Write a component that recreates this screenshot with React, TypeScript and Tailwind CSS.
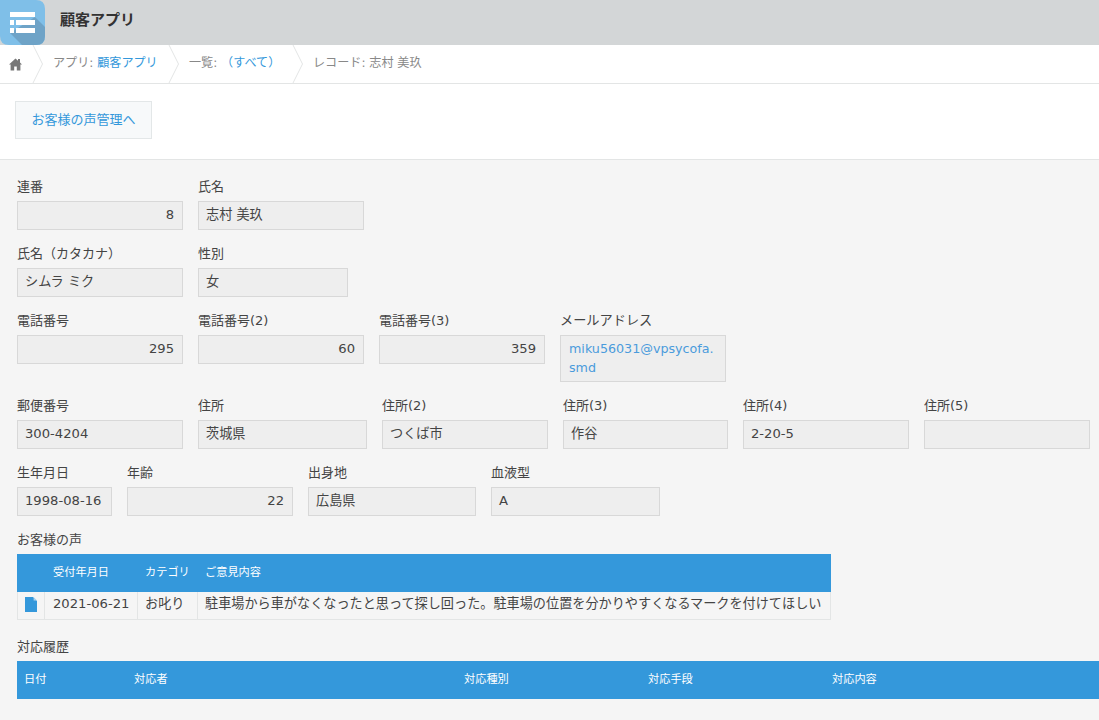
import React from 'react';

const FONT = '"DejaVu Sans", "Noto Sans CJK JP", sans-serif';

type FieldProps = {
  label: string;
  value?: string;
  width: string;
  right?: boolean;
};

const Field: React.FC<FieldProps> = ({ label, value, width, right }) => (
  <div className={`${width} shrink-0`}>
    <div className="h-[22px] text-[13px] leading-[15px] text-[#444444] whitespace-nowrap">{label}</div>
    <div
      className={`h-[29px] border border-[#d8d8d8] bg-[#eeeeee] pl-[7px] pr-[8px] text-[13.15px] leading-[25px] text-[#444444] whitespace-nowrap ${right ? 'text-right' : ''}`}
    >
      {value}
    </div>
  </div>
);

const Crumb: React.FC = () => (
  <svg width="12" height="38" viewBox="0 0 12 38" className="shrink-0" fill="none">
    <path d="M1 0 L10.5 19 L1 38" stroke="#e3e5e5" strokeWidth="1" />
  </svg>
);

const AppIcon: React.FC = () => (
  <svg width="45" height="45" viewBox="0 0 45 45" className="shrink-0">
    <defs>
      <clipPath id="appClip">
        <path d="M0 0 H36 Q45 0 45 9 V36 Q45 45 36 45 H9 Q0 45 0 36 Z" />
      </clipPath>
    </defs>
    <g clipPath="url(#appClip)">
      <rect width="45" height="45" fill="#7fbfe8" />
      <path d="M35 17 L45 27 V45 H22 L10 33 Z" fill="#6ea3c7" />
      <rect x="10" y="12" width="25" height="5" fill="#ffffff" />
      <rect x="10" y="20" width="4" height="5" fill="#ffffff" />
      <rect x="16" y="20" width="19" height="5" fill="#ffffff" />
      <rect x="10" y="28" width="4" height="5" fill="#ffffff" />
      <rect x="16" y="28" width="19" height="5" fill="#ffffff" />
    </g>
  </svg>
);

const App: React.FC = () => {
  return (
    <div className="h-[720px] w-[1099px] overflow-hidden bg-[#f5f5f5]" style={{ fontFamily: FONT }}>
      {/* App header */}
      <div className="flex h-[45px] items-center bg-[#d3d6d7]">
        <AppIcon />
        <div className="ml-[15px] mb-[4px] text-[15px] font-bold text-[#333333]">顧客アプリ</div>
      </div>

      {/* Breadcrumb */}
      <div className="flex h-[39px] items-center border-b border-[#e3e5e5] bg-white text-[12.1px] text-[#888888]">
        <svg width="13" height="13" viewBox="0 0 13 13" className="ml-[9px] mr-[10px] shrink-0" fill="#777777">
          <path d="M6.5 0.5 L9 2.8 V1 H11 V4.6 L13 6.6 H11.4 V12.5 H7.8 V8.4 H5.2 V12.5 H1.6 V6.6 H0 Z" />
        </svg>
        <Crumb />
        <div className="ml-[9px] mb-[2px] w-[115px] whitespace-nowrap">
          アプリ: <span className="text-[#3498db]">顧客アプリ</span>
        </div>
        <Crumb />
        <div className="ml-[9px] mb-[2px] w-[103px] whitespace-nowrap">
          一覧: <span className="text-[#3498db]">（すべて）</span>
        </div>
        <Crumb />
        <div className="ml-[9px] mb-[2px] whitespace-nowrap">レコード: 志村 美玖</div>
      </div>

      {/* Action button */}
      <div className="h-[76px] border-b border-[#e3e5e5] bg-white pl-[15px] pt-[17px]">
        <div className="flex h-[38px] w-[137px] items-center justify-center border border-[#e3e7e8] bg-[#f7f9fa] text-[13px] text-[#3498db]">
          お客様の声管理へ
        </div>
      </div>

      {/* Record form */}
      <div className="pl-[17px] pt-[19px]">
        <div className="flex h-[67px] gap-[15px]">
          <Field label="連番" value="8" width="w-[166px]" right />
          <Field label="氏名" value="志村 美玖" width="w-[166px]" />
        </div>
        <div className="flex h-[67px] gap-[15px]">
          <Field label="氏名（カタカナ）" value="シムラ ミク" width="w-[166px]" />
          <Field label="性別" value="女" width="w-[150px]" />
        </div>
        <div className="flex h-[85px] gap-[15px]">
          <Field label="電話番号" value="295" width="w-[166px]" right />
          <Field label="電話番号(2)" value="60" width="w-[166px]" right />
          <Field label="電話番号(3)" value="359" width="w-[166px]" right />
          <div className="w-[166px] shrink-0">
            <div className="h-[22px] text-[13.2px] leading-[15px] text-[#444444]">メールアドレス</div>
            <div className="h-[47px] border border-[#d8d8d8] bg-[#eeeeee] pl-[8px] py-[3px] text-[12.7px] leading-[19px] text-[#4a9bdc] whitespace-nowrap">
              miku56031@vpsycofa.
              <br />
              smd
            </div>
          </div>
        </div>
        <div className="flex h-[67px] gap-[15px]">
          <Field label="郵便番号" value="300-4204" width="w-[166px]" />
          <Field label="住所" value="茨城県" width="w-[169px]" />
          <Field label="住所(2)" value="つくば市" width="w-[166px]" />
          <Field label="住所(3)" value="作谷" width="w-[165px]" />
          <Field label="住所(4)" value="2-20-5" width="w-[166px]" />
          <Field label="住所(5)" width="w-[166px]" />
        </div>
        <div className="flex h-[67px] gap-[15px]">
          <Field label="生年月日" value="1998-08-16" width="w-[95px]" />
          <Field label="年齢" value="22" width="w-[166px]" right />
          <Field label="出身地" value="広島県" width="w-[168px]" />
          <Field label="血液型" value="A" width="w-[169px]" />
        </div>

        {/* Voice table */}
        <div className="h-[22px] text-[13px] leading-[15px] text-[#444444]">お客様の声</div>
        <div className="w-[814px]">
          <div className="flex h-[38px] items-center bg-[#3498db] text-[11.2px] text-white">
            <div className="w-[36px] shrink-0" />
            <div className="w-[92px] shrink-0">受付年月日</div>
            <div className="w-[60px] shrink-0">カテゴリ</div>
            <div>ご意見内容</div>
          </div>
          <div className="flex h-[28px] border-x border-b border-[#e3e5e5] text-[13.15px] leading-[24px] text-[#444444]">
            <div className="flex w-[27px] shrink-0 justify-center border-r border-[#e3e5e5] pt-[5px]">
              <svg width="12" height="15" viewBox="0 0 12 15" fill="#3498db">
                <path d="M0 0 H8 L12 4 V15 H0 Z" />
                <path d="M8.6 0 L12 3.4 H8.6 Z" fill="#a9d2ee" />
              </svg>
            </div>
            <div className="w-[93px] shrink-0 border-r border-[#e3e5e5] pl-[8px]">2021-06-21</div>
            <div className="w-[60px] shrink-0 border-r border-[#e3e5e5] pl-[7px]">お叱り</div>
            <div className="whitespace-nowrap pl-[7px]">駐車場から車がなくなったと思って探し回った。駐車場の位置を分かりやすくなるマークを付けてほしい</div>
          </div>
        </div>

        {/* History table */}
        <div className="mt-[19px] h-[22px] text-[13px] leading-[15px] text-[#444444]">対応履歴</div>
        <div className="flex h-[38px] w-[1082px] items-center bg-[#3498db] text-[11.2px] text-white">
          <div className="w-[117px] shrink-0 pl-[7px]">日付</div>
          <div className="w-[330px] shrink-0">対応者</div>
          <div className="w-[184px] shrink-0">対応種別</div>
          <div className="w-[184px] shrink-0">対応手段</div>
          <div>対応内容</div>
        </div>
      </div>
    </div>
  );
};

export default App;
